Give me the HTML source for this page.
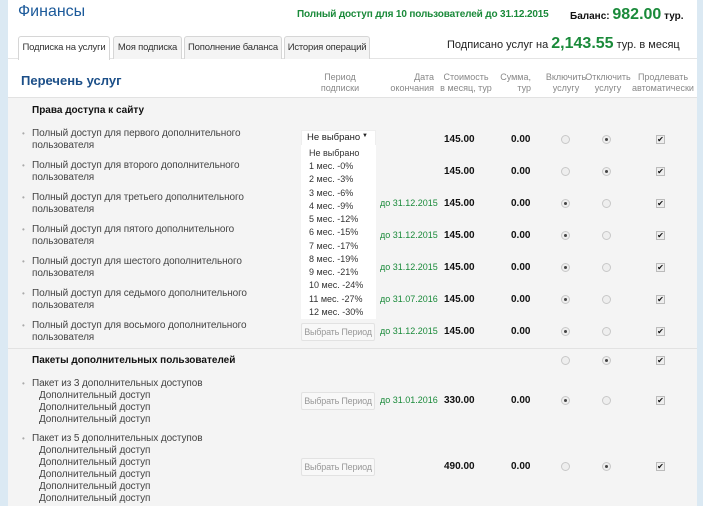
<!DOCTYPE html>
<html><head><meta charset="utf-8"><style>
*{margin:0;padding:0;box-sizing:border-box}
body{width:703px;height:506px;overflow:hidden;background:#dbe9f3;font-family:"Liberation Sans","DejaVu Sans",sans-serif;font-size:10px;color:#333;position:relative}
.a{position:absolute;white-space:nowrap}
#panel{position:absolute;left:8px;top:0;width:689px;height:506px;background:#f4f4f4}
#top{position:absolute;left:8px;top:0;width:689px;height:98px;background:#fff;border-bottom:1px solid #e2e2e2}
.tab{position:absolute;top:36px;height:23px;border:1px solid #d6d6d6;border-bottom:none;background:#f4f4f4;border-radius:3px 3px 0 0;font-size:9.5px;padding:5px 0;text-align:center;color:#333;overflow:hidden;white-space:nowrap;letter-spacing:-0.2px}
.tab.on{background:#fff;height:24px}
.hd{color:#888;font-size:9px;text-align:center;line-height:11px}
.nm{left:32px;line-height:12px;font-size:10px;color:#444;letter-spacing:-0.1px}
.nm i{font-style:normal;padding-left:7px}
.bul{left:22px;color:#aaa;font-size:8px}
.b{font-weight:bold;color:#111;font-size:10px}
.dt{color:#1a8a3a;font-size:9px}
.r{width:9px;height:9px;border-radius:50%;border:1px solid #c8c8c8;background:#eee}
.r.on::after{content:"";position:absolute;left:2px;top:2px;width:3px;height:3px;border-radius:50%;background:#444}
.cb{width:9px;height:9px;border:1px solid #bbb;background:#eee;font-size:8px;line-height:7px;text-align:center;color:#111}
.btn{width:74px;height:18px;border:1px solid #e2e2e2;border-radius:2px;background:#f8f8f8;color:#999;font-size:9px;text-align:center;line-height:16px;letter-spacing:-0.2px}
.dd{left:301px;top:145px;width:75px;height:174px;background:#fff}
.di{left:309px;font-size:9px;color:#333}
</style></head><body>
<div id="panel"></div>
<div id="top"></div>
<div class="a" style="left:18px;top:3px;font-size:16px;color:#1c5a9a">Финансы</div>
<div class="a" style="left:297px;top:9px;font-size:10px;font-weight:bold;color:#1a8a3a;letter-spacing:-0.15px">Полный доступ для 10 пользователей до 31.12.2015</div>
<div class="a" style="left:570px;top:6px;font-size:10px;font-weight:bold;color:#111">Баланс: <span style="font-size:16px;color:#1a8a3a">982.00</span> тур.</div>
<div class="a" style="left:447px;top:35px;font-size:11px;color:#222">Подписано услуг на <span style="font-size:16px;font-weight:bold;color:#1a8a3a">2,143.55</span> тур. в месяц</div>
<div class="a" style="left:8px;top:58px;width:689px;height:1px;background:#e4e4e4"></div>
<div class="tab on" style="left:18px;width:92px">Подписка на услуги</div>
<div class="tab" style="left:113px;width:69px">Моя подписка</div>
<div class="tab" style="left:184px;width:98px">Пополнение баланса</div>
<div class="tab" style="left:284px;width:86px">История операций</div>
<div class="a" style="left:21px;top:73px;font-size:13px;font-weight:bold;color:#1c4f88">Перечень услуг</div>
<div class="a hd" style="left:310px;top:72px;width:60px">Период<br>подписки</div>
<div class="a hd" style="left:386px;top:72px;width:48px;text-align:right">Дата<br>окончания</div>
<div class="a hd" style="left:438px;top:72px;width:56px">Стоимость<br>в месяц, тур</div>
<div class="a hd" style="left:500px;top:72px;width:31px;text-align:right">Сумма,<br>тур</div>
<div class="a hd" style="left:543px;top:72px;width:46px">Включить<br>услугу</div>
<div class="a hd" style="left:585px;top:72px;width:46px">Отключить<br>услугу</div>
<div class="a hd" style="left:632px;top:72px;width:62px">Продлевать<br>автоматически</div>
<div class="a b" style="left:32px;top:105px">Права доступа к сайту</div>

<div class="a bul" style="top:129px">•</div><div class="a nm" style="top:128px">Полный доступ для первого дополнительного<br>пользователя</div>
<div class="a bul" style="top:161px">•</div><div class="a nm" style="top:160px">Полный доступ для второго дополнительного<br>пользователя</div>
<div class="a bul" style="top:193px">•</div><div class="a nm" style="top:192px">Полный доступ для третьего дополнительного<br>пользователя</div>
<div class="a bul" style="top:225px">•</div><div class="a nm" style="top:224px">Полный доступ для пятого дополнительного<br>пользователя</div>
<div class="a bul" style="top:257px">•</div><div class="a nm" style="top:256px">Полный доступ для шестого дополнительного<br>пользователя</div>
<div class="a bul" style="top:289px">•</div><div class="a nm" style="top:288px">Полный доступ для седьмого дополнительного<br>пользователя</div>
<div class="a bul" style="top:321px">•</div><div class="a nm" style="top:320px">Полный доступ для восьмого дополнительного<br>пользователя</div>

<div class="a dt" style="left:380px;top:198px">до 31.12.2015</div>
<div class="a dt" style="left:380px;top:230px">до 31.12.2015</div>
<div class="a dt" style="left:380px;top:262px">до 31.12.2015</div>
<div class="a dt" style="left:380px;top:294px">до 31.07.2016</div>
<div class="a dt" style="left:380px;top:326px">до 31.12.2015</div>
<div class="a dt" style="left:380px;top:395px">до 31.01.2016</div>

<div class="a b" style="left:444px;top:134px">145.00</div>
<div class="a b" style="left:444px;top:166px">145.00</div>
<div class="a b" style="left:444px;top:198px">145.00</div>
<div class="a b" style="left:444px;top:230px">145.00</div>
<div class="a b" style="left:444px;top:262px">145.00</div>
<div class="a b" style="left:444px;top:294px">145.00</div>
<div class="a b" style="left:444px;top:326px">145.00</div>
<div class="a b" style="left:444px;top:395px">330.00</div>
<div class="a b" style="left:444px;top:461px">490.00</div>
<div class="a b" style="left:511px;top:134px">0.00</div>
<div class="a b" style="left:511px;top:166px">0.00</div>
<div class="a b" style="left:511px;top:198px">0.00</div>
<div class="a b" style="left:511px;top:230px">0.00</div>
<div class="a b" style="left:511px;top:262px">0.00</div>
<div class="a b" style="left:511px;top:294px">0.00</div>
<div class="a b" style="left:511px;top:326px">0.00</div>
<div class="a b" style="left:511px;top:395px">0.00</div>
<div class="a b" style="left:511px;top:461px">0.00</div>

<div class="a r" style="left:561px;top:135px"></div><div class="a r on" style="left:602px;top:135px"></div><div class="a cb" style="left:656px;top:135px">✔</div>
<div class="a r" style="left:561px;top:167px"></div><div class="a r on" style="left:602px;top:167px"></div><div class="a cb" style="left:656px;top:167px">✔</div>
<div class="a r on" style="left:561px;top:199px"></div><div class="a r" style="left:602px;top:199px"></div><div class="a cb" style="left:656px;top:199px">✔</div>
<div class="a r on" style="left:561px;top:231px"></div><div class="a r" style="left:602px;top:231px"></div><div class="a cb" style="left:656px;top:231px">✔</div>
<div class="a r on" style="left:561px;top:263px"></div><div class="a r" style="left:602px;top:263px"></div><div class="a cb" style="left:656px;top:263px">✔</div>
<div class="a r on" style="left:561px;top:295px"></div><div class="a r" style="left:602px;top:295px"></div><div class="a cb" style="left:656px;top:295px">✔</div>
<div class="a r on" style="left:561px;top:327px"></div><div class="a r" style="left:602px;top:327px"></div><div class="a cb" style="left:656px;top:327px">✔</div>
<div class="a r" style="left:561px;top:356px"></div><div class="a r on" style="left:602px;top:356px"></div><div class="a cb" style="left:656px;top:356px">✔</div>
<div class="a r on" style="left:561px;top:396px"></div><div class="a r" style="left:602px;top:396px"></div><div class="a cb" style="left:656px;top:396px">✔</div>
<div class="a r" style="left:561px;top:462px"></div><div class="a r on" style="left:602px;top:462px"></div><div class="a cb" style="left:656px;top:462px">✔</div>

<div class="a btn" style="left:301px;top:323px">Выбрать Период</div>
<div class="a btn" style="left:301px;top:392px">Выбрать Период</div>
<div class="a btn" style="left:301px;top:458px">Выбрать Период</div>

<div class="a" style="left:8px;top:348px;width:689px;height:1px;background:#e2e2e2"></div>
<div class="a b" style="left:32px;top:355px">Пакеты дополнительных пользователей</div>
<div class="a bul" style="top:379px">•</div><div class="a nm" style="top:378px">Пакет из 3 дополнительных доступов<br><i>Дополнительный доступ</i><br><i>Дополнительный доступ</i><br><i>Дополнительный доступ</i></div>
<div class="a bul" style="top:434px">•</div><div class="a nm" style="top:433px">Пакет из 5 дополнительных доступов<br><i>Дополнительный доступ</i><br><i>Дополнительный доступ</i><br><i>Дополнительный доступ</i><br><i>Дополнительный доступ</i><br><i>Дополнительный доступ</i></div>

<div class="a" style="left:301px;top:130px;width:75px;height:16px;background:#fff;border:1px solid #eee;font-size:9.5px;padding:1px 5px;color:#222">Не выбрано<span style="position:absolute;right:7px;top:2px;font-size:6px">▼</span></div>
<div class="a dd"></div>
<div class="a di" style="top:148px">Не выбрано</div>
<div class="a di" style="top:161px">1 мес. -0%</div>
<div class="a di" style="top:174px">2 мес. -3%</div>
<div class="a di" style="top:188px">3 мес. -6%</div>
<div class="a di" style="top:201px">4 мес. -9%</div>
<div class="a di" style="top:214px">5 мес. -12%</div>
<div class="a di" style="top:227px">6 мес. -15%</div>
<div class="a di" style="top:241px">7 мес. -17%</div>
<div class="a di" style="top:254px">8 мес. -19%</div>
<div class="a di" style="top:267px">9 мес. -21%</div>
<div class="a di" style="top:280px">10 мес. -24%</div>
<div class="a di" style="top:294px">11 мес. -27%</div>
<div class="a di" style="top:307px">12 мес. -30%</div>
</body></html>
